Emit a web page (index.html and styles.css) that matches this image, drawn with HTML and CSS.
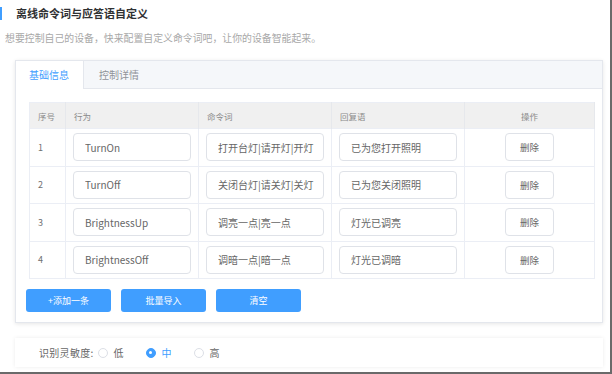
FILE: index.html
```html
<!DOCTYPE html>
<html lang="zh-CN">
<head>
<meta charset="utf-8">
<title>离线命令词与应答语自定义</title>
<link rel="stylesheet" href="styles.css">
</head>
<body>
<div class="page">
  <h1 class="title">离线命令词与应答语自定义</h1>
  <p class="subtitle">想要控制自己的设备，快来配置自定义命令词吧，让你的设备智能起来。</p>

  <div class="card">
    <div class="tabs">
      <div class="tab active">基础信息</div>
      <div class="tab">控制详情</div>
    </div>
    <div class="card-body">
      <table class="grid">
        <thead>
          <tr>
            <th class="c-no">序号</th>
            <th class="c-act">行为</th>
            <th class="c-cmd">命令词</th>
            <th class="c-rep">回复语</th>
            <th class="c-op">操作</th>
          </tr>
        </thead>
        <tbody>
          <tr>
            <td class="c-no">1</td>
            <td><input class="inp" value="TurnOn" readonly></td>
            <td><input class="inp" value="打开台灯|请开灯|开灯" readonly></td>
            <td><input class="inp" value="已为您打开照明" readonly></td>
            <td class="c-op"><button class="del">删除</button></td>
          </tr>
          <tr>
            <td class="c-no">2</td>
            <td><input class="inp" value="TurnOff" readonly></td>
            <td><input class="inp" value="关闭台灯|请关灯|关灯" readonly></td>
            <td><input class="inp" value="已为您关闭照明" readonly></td>
            <td class="c-op"><button class="del">删除</button></td>
          </tr>
          <tr>
            <td class="c-no">3</td>
            <td><input class="inp" value="BrightnessUp" readonly></td>
            <td><input class="inp" value="调亮一点|亮一点" readonly></td>
            <td><input class="inp" value="灯光已调亮" readonly></td>
            <td class="c-op"><button class="del">删除</button></td>
          </tr>
          <tr>
            <td class="c-no">4</td>
            <td><input class="inp" value="BrightnessOff" readonly></td>
            <td><input class="inp" value="调暗一点|暗一点" readonly></td>
            <td><input class="inp" value="灯光已调暗" readonly></td>
            <td class="c-op"><button class="del">删除</button></td>
          </tr>
        </tbody>
      </table>
      <div class="actions">
        <button class="btn">+添加一条</button>
        <button class="btn">批量导入</button>
        <button class="btn">清空</button>
      </div>
    </div>
  </div>

  <div class="panel">
    <span class="label">识别灵敏度:</span>
    <span class="radio"><span class="dot"></span><span class="rtext">低</span></span>
    <span class="radio checked"><span class="dot"></span><span class="rtext">中</span></span>
    <span class="radio"><span class="dot"></span><span class="rtext">高</span></span>
  </div>
</div>
</body>
</html>
```

FILE: styles.css
```css
* { box-sizing: border-box; }
html, body { margin: 0; padding: 0; background: #fff; }
body {
  font-family: "Noto Sans CJK SC", "Noto Sans", "Liberation Sans", sans-serif;
  color: #606266;
}
.page {
  width: 612px;
  height: 374px;
  border-right: 2px solid #6a6a6a;
  border-bottom: 2px solid #6a6a6a;
  padding-top: 7px;
  overflow: hidden;
}
.title {
  margin: 0;
  height: 13px;
  line-height: 13px;
  font-size: 11px;
  font-weight: bold;
  color: #303133;
  border-left: 2px solid #409eff;
  padding-left: 14px;
}
.subtitle {
  margin: 12px 0 0;
  padding-left: 5px;
  height: 12px;
  line-height: 12px;
  font-size: 9.9px;
  color: #a8a8a8;
  white-space: nowrap;
}
.card {
  margin: 16px 0 0 15px;
  width: 588px;
  border: 1px solid #e4e7ed;
  box-shadow: 0 1px 4px rgba(0,0,0,0.10);
  background: #fff;
}
.tabs {
  display: flex;
  height: 28px;
  background: #f5f7fa;
  border-bottom: 1px solid #e4e7ed;
}
.tab {
  padding: 0 14px 0 13px;
  line-height: 27px;
  font-size: 10px;
  color: #909399;
}
.tab.active {
  background: #fff;
  color: #409eff;
  border-right: 1px solid #e4e7ed;
  height: 28px;
}
.tab + .tab { padding-left: 15px; }
.card-body {
  padding: 13px 0 10px 10px;
}
.grid {
  margin-left: 3px;
  width: 566px;
  border-collapse: collapse;
  table-layout: fixed;
  border: 1px solid #ebeef5;
}
.grid th {
  height: 26px;
  background: #f0f0f0;
  font-size: 8.5px;
  font-weight: normal;
  color: #8a8a8a;
  text-align: left;
  padding: 0 0 0 8px;
  border-right: 1px solid #e6e8ec;
}
.grid td {
  height: 37.5px;
  padding: 0 0 0 7px;
  border-top: 1px solid #ebeef5;
  border-right: 1px solid #ebeef5;
  font-size: 9px;
  color: #707070;
}
.grid .c-no { width: 36px; padding-left: 8px; }
.grid .c-act, .grid .c-cmd, .grid .c-rep { width: 133px; }
.grid th.c-op { text-align: center; padding-left: 0; }
.grid td.c-op { text-align: center; padding-left: 0; }
.inp {
  display: block;
  width: 118px;
  height: 28px;
  border: 1px solid #dfe2e8;
  border-radius: 4px;
  padding: 0 6px 0 11px;
  font-family: inherit;
  font-size: 10px;
  color: #666;
  background: #fff;
  outline: none;
}
.del {
  width: 49px;
  height: 28px;
  border: 1px solid #dfe2e8;
  border-radius: 4px;
  background: #fff;
  font-family: inherit;
  font-size: 9.5px;
  color: #666;
  padding: 0;
}
.actions {
  display: flex;
  gap: 10px;
  margin-top: 10px;
}
.btn {
  width: 85px;
  height: 23px;
  border: none;
  border-radius: 3px;
  background: #409eff;
  color: #fff;
  font-family: inherit;
  font-size: 9px;
  padding: 0;
}
.panel {
  margin: 15px 0 0 15px;
  width: 588px;
  height: 29px;
  display: flex;
  align-items: center;
  padding-left: 24px;
  background: #fff;
  box-shadow: 0 0 4px rgba(0,0,0,0.08);
  font-size: 10px;
}
.label { color: #666; margin-right: 4px; letter-spacing: 0.3px; }
.radio {
  display: inline-flex;
  align-items: center;
  margin-right: 22px;
  color: #666;
}
.dot {
  width: 10px;
  height: 10px;
  border-radius: 50%;
  border: 1px solid #dcdfe6;
  background: #fff;
  margin-right: 6px;
  position: relative;
}
.radio.checked .dot {
  border-color: #409eff;
  background: #409eff;
}
.radio.checked .dot::after {
  content: "";
  position: absolute;
  left: 2.5px;
  top: 2.5px;
  width: 3px;
  height: 3px;
  border-radius: 50%;
  background: #fff;
}
.radio.checked .rtext { color: #409eff; }
```
